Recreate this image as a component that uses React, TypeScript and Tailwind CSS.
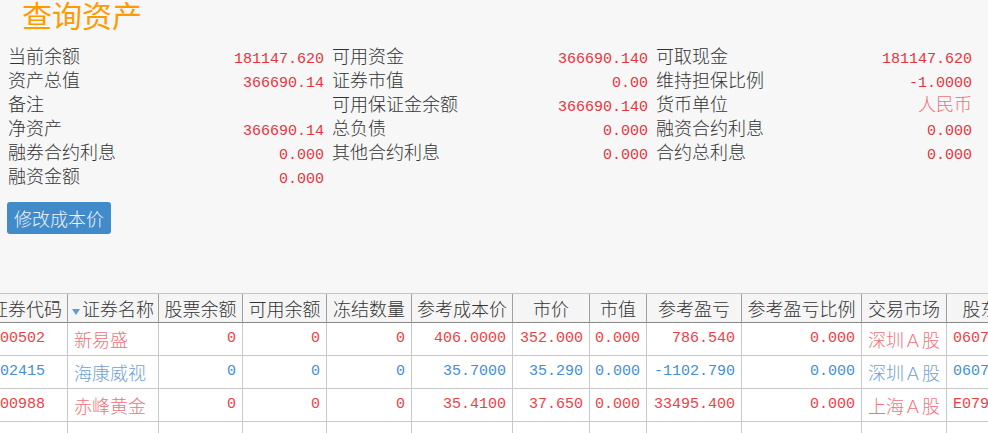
import React from 'react'

// 资产汇总 + 持仓列表
const CJK = { fontFamily: '"Noto Sans CJK SC", "Noto Sans", sans-serif' }
const NUM = { fontFamily: '"Liberation Mono", "Noto Sans CJK SC", monospace' }

type Info = { label: string; value: string; cjk?: boolean }

const infoCols: Info[][] = [
  [
    { label: '当前余额', value: '181147.620' },
    { label: '资产总值', value: '366690.14' },
    { label: '备注', value: '' },
    { label: '净资产', value: '366690.14' },
    { label: '融券合约利息', value: '0.000' },
    { label: '融资金额', value: '0.000' },
  ],
  [
    { label: '可用资金', value: '366690.140' },
    { label: '证券市值', value: '0.00' },
    { label: '可用保证金余额', value: '366690.140' },
    { label: '总负债', value: '0.000' },
    { label: '其他合约利息', value: '0.000' },
  ],
  [
    { label: '可取现金', value: '181147.620' },
    { label: '维持担保比例', value: '-1.0000' },
    { label: '货币单位', value: '人民币', cjk: true },
    { label: '融资合约利息', value: '0.000' },
    { label: '合约总利息', value: '0.000' },
  ],
]

type Col = { key: string; title: string; width: string; align: 'left' | 'right'; cjk?: boolean; sort?: boolean }

const columns: Col[] = [
  { key: 'code', title: '证券代码', width: 'w-[83px]', align: 'left' },
  { key: 'name', title: '证券名称', width: 'w-[91px]', align: 'left', cjk: true, sort: true },
  { key: 'bal', title: '股票余额', width: 'w-[84px]', align: 'right' },
  { key: 'avail', title: '可用余额', width: 'w-[84px]', align: 'right' },
  { key: 'frozen', title: '冻结数量', width: 'w-[85px]', align: 'right' },
  { key: 'cost', title: '参考成本价', width: 'w-[101px]', align: 'right' },
  { key: 'price', title: '市价', width: 'w-[77px]', align: 'right' },
  { key: 'mv', title: '市值', width: 'w-[57px]', align: 'right' },
  { key: 'pl', title: '参考盈亏', width: 'w-[95px]', align: 'right' },
  { key: 'plr', title: '参考盈亏比例', width: 'w-[120px]', align: 'right' },
  { key: 'mkt', title: '交易市场', width: 'w-[85px]', align: 'left', cjk: true },
  { key: 'holder', title: '股东代码', width: 'w-[104px]', align: 'left' },
]

type Row = Record<string, string> & { tone: 'red' | 'blue' }

const rows: Row[] = [
  { tone: 'red', code: '300502', name: '新易盛', bal: '0', avail: '0', frozen: '0', cost: '406.0000', price: '352.000', mv: '0.000', pl: '786.540', plr: '0.000', mkt: '深圳Ａ股', holder: '0607385192' },
  { tone: 'blue', code: '002415', name: '海康威视', bal: '0', avail: '0', frozen: '0', cost: '35.7000', price: '35.290', mv: '0.000', pl: '-1102.790', plr: '0.000', mkt: '深圳Ａ股', holder: '0607385192' },
  { tone: 'red', code: '600988', name: '赤峰黄金', bal: '0', avail: '0', frozen: '0', cost: '35.4100', price: '37.650', mv: '0.000', pl: '33495.400', plr: '0.000', mkt: '上海Ａ股', holder: 'E079216543' },
]

const toneText = {
  red: { num: 'text-[#f23d45]', cjk: 'text-[#f4707a]' },
  blue: { num: 'text-[#3f8fd8]', cjk: 'text-[#6fa0d4]' },
}

const SortArrow = () => (
  <svg width="8" height="6" viewBox="0 0 8 6" className="mr-[2px] mt-[7px] shrink-0">
    <path d="M0 0 H8 L4 6 Z" fill="#5b9bd8" />
  </svg>
)

export default function App() {
  return (
    <div className="w-[988px] h-[433px] overflow-hidden bg-[#f7f7f7] text-[#333]" style={CJK}>
      {/* 标题 */}
      <div className="h-[43px] pl-[22px] text-[30px] leading-[28px] text-[#ff9a00]">查询资产</div>

      {/* 资产信息 */}
      <div className="grid grid-cols-[324px_324px_324px] pl-[8px]">
        {infoCols.map((col, ci) => (
          <div key={ci} className="flex flex-col pr-[8px]">
            {col.map((it) => (
              <div key={it.label} className="flex h-[24px] items-baseline justify-between text-[18px] leading-[24px] font-light">
                <span>{it.label}</span>
                <span
                  className={it.cjk ? 'text-[#f07078]' : 'text-[#e8343e] text-[15px]'}
                  style={it.cjk ? CJK : NUM}
                >
                  {it.value}
                </span>
              </div>
            ))}
          </div>
        ))}
      </div>

      <button className="ml-[7px] mt-[15px] flex h-[32px] w-[104px] items-center justify-center rounded-[3px] bg-[#428bca] text-[18px] font-light text-[#f0f4fa]">
        修改成本价
      </button>

      {/* 持仓列表 */}
      <div className="mt-[59px] w-[988px] overflow-hidden">
        <div className="ml-[-15px] w-max">
          <div className="flex h-[30px] border-y border-t-[#b9c7d6] border-b-[#8a8a8a] bg-[#f5f5f5]">
            {columns.map((c) => (
              <div
                key={c.key}
                className={`${c.width} flex shrink-0 items-center justify-center border-r border-[#a0a0a0] text-[18px] font-light`}
              >
                {c.sort && <SortArrow />}
                {c.title}
              </div>
            ))}
          </div>
          {[...rows, null].map((r, ri) => (
            <div key={ri} className="flex h-[33px] border-b border-[#c8c8c8] bg-white">
              {columns.map((c) => {
                const tone = r ? toneText[r.tone] : null
                return (
                  <div
                    key={c.key}
                    className={`${c.width} flex shrink-0 items-center border-r border-[#c8c8c8] ${
                      c.align === 'right' ? 'justify-end pr-[6px]' : 'justify-start pl-[6px]'
                    } ${c.key === 'code' ? 'pl-[4px]' : ''}`}
                  >
                    {r && (
                      <span
                        className={c.cjk ? `${tone!.cjk} text-[18px] font-light` : `${tone!.num} text-[15px]`}
                        style={c.cjk ? CJK : NUM}
                      >
                        {r[c.key]}
                      </span>
                    )}
                  </div>
                )
              })}
            </div>
          ))}
        </div>
      </div>
    </div>
  )
}
